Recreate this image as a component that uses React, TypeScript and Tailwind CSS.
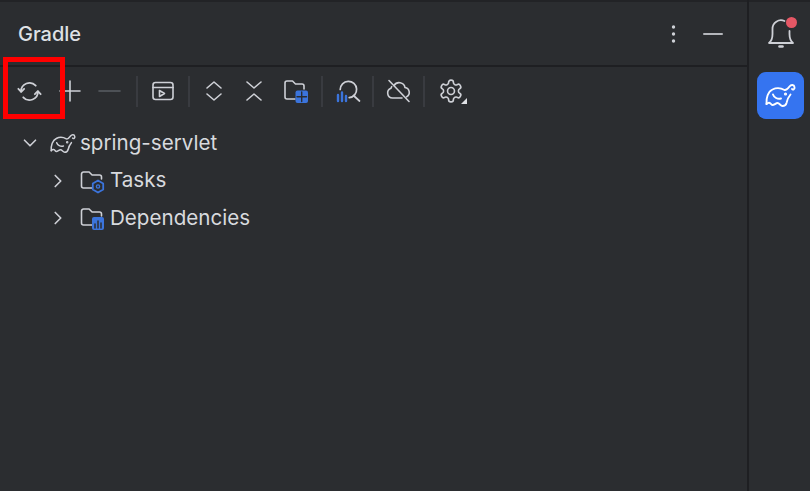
const stroke = "#ced0d6";
const blue = "#3b74dc";

function I({ children, size = 24, view = 24, className = "" }: { children: React.ReactNode; size?: number; view?: number; className?: string }) {
  return (
    <svg width={size} height={size} viewBox={`0 0 ${view} ${view}`} fill="none" stroke={stroke} strokeWidth={1.6} strokeLinecap="round" strokeLinejoin="round" className={className}>
      {children}
    </svg>
  );
}

function Btn({ children, className = "w-10" }: { children: React.ReactNode; className?: string }) {
  return <div className={`flex h-10 shrink-0 items-center justify-center ${className}`}>{children}</div>;
}

function Sep() {
  return <div className="mx-[6px] h-[31px] w-[2px] shrink-0 bg-[#393b40]" />;
}

const Elephant = ({ color, width, height, sw = 1.6 }: { color: string; width: number; height: number; sw?: number }) => (
  <svg width={width} height={height} viewBox="8 10 31 25" fill="none" stroke={color} strokeWidth={sw} strokeLinecap="round" strokeLinejoin="round">
    <path d="M9.500 31 C9 25 11 18.500 15.500 16.500 C19.500 14.500 24 15 27.500 17 C29.500 17.500 31 15.500 32.500 13.500 C34 11.500 37 11.500 37.500 14 C38 16 36 17.500 35 16" />
    <path d="M9.500 31 C11.500 29 13 29.500 14.500 31.500 C16 33.500 18.500 30 20.500 30 C22.500 30 23.500 33 25.500 33 C27.500 33 29 32 29.500 30 C30 27 31 24.500 33.500 21.500" />
    <path d="M16 21.500 C17 24.500 20.500 26.500 24 25.500" />
    <circle cx="28.500" cy="21" r="0.6" fill={color} />
  </svg>
);

const Folder = ({ children }: { children?: React.ReactNode }) => (
  <svg width="26" height="26" viewBox="0 0 26 26" fill="none" strokeLinecap="round" strokeLinejoin="round">
    <path d="M13 20H4.500a2 2 0 0 1-2-2V6a2 2 0 0 1 2-2h5.600l3 3h7.400a2 2 0 0 1 2 2v2" stroke={stroke} strokeWidth="1.600" />
    {children}
  </svg>
);

function Row({ indent, chevron, icon, label }: { indent: string; chevron: React.ReactNode; icon: React.ReactNode; label: string }) {
  return (
    <div className={`flex h-[37.5px] items-center ${indent}`}>
      <div className="flex w-[24px] justify-center">{chevron}</div>
      {icon}
      <span className="text-[20.6px] leading-none text-[#d8dade]">{label}</span>
    </div>
  );
}

export default function App() {
  return (
    <div className="relative flex h-[491px] w-[810px] overflow-hidden bg-[#2b2d30] font-['Inter',sans-serif]">
      <main className="flex min-w-0 flex-1 flex-col border-r-2 border-[#1e1f22]">
        <header className="flex h-[67px] shrink-0 items-center justify-between border-y-2 border-t-[#222326] border-b-[#1e1f22] pl-[18px] pr-[24px]">
          <h1 className="text-[20px] font-medium text-[#dfe1e5]">Gradle</h1>
          <div className="flex items-center gap-[18px]">
            <svg width="22" height="22" viewBox="0 0 22 22" fill="#ced0d6">
              <circle cx="10.500" cy="4" r="1.700" />
              <circle cx="10.500" cy="11" r="1.700" />
              <circle cx="10.500" cy="18" r="1.700" />
            </svg>
            <div className="h-[2px] w-[20px] rounded bg-[#b4b6bb]" />
          </div>
        </header>

        <div className="flex h-[48px] shrink-0 items-center pl-[10px]">
          <Btn>
            <I size={25} view={28} className="-translate-x-px">
              <path d="M4.500 14a9.500 9.500 0 0 1 16.500-6.500" strokeWidth="2" />
              <path d="M23.500 14a9.500 9.500 0 0 1-16.500 6.500" strokeWidth="2" />
              <path d="M1.500 11l3.200 3.400L8 11" strokeWidth="2" />
              <path d="M20 17l3.300-3.400 3.200 3.400" strokeWidth="2" />
            </I>
          </Btn>
          <Btn>
            <I>
              <path d="M12 2v20M2 12h20" />
            </I>
          </Btn>
          <Btn>
            <I>
              <path d="M1 12h21" stroke="#5a5d63" />
            </I>
          </Btn>
          <Sep />
          <Btn className="w-[38px]">
            <I>
              <rect x="2" y="3.500" width="20" height="17" rx="2.500" />
              <path d="M2 8.500h20" />
              <path d="M8.500 11.500v6l5-3z" />
            </I>
          </Btn>
          <Sep />
          <Btn className="w-[36px]">
            <I>
              <path d="M5 9l7-6 7 6M5 15l7 6 7-6" />
            </I>
          </Btn>
          <Btn className="w-[44px]">
            <I>
              <path d="M5 3l7 6 7-6M5 21l7-6 7 6" />
            </I>
          </Btn>
          <Btn className="w-[39px]">
            <svg width="26" height="26" viewBox="0 0 26 26" fill="none" strokeLinecap="round" strokeLinejoin="round">
              <path d="M12 21H4a2 2 0 0 1-2-2V5a2 2 0 0 1 2-2h5.500l3 3H19a2 2 0 0 1 2 2v3" stroke={stroke} strokeWidth="1.600" />
              <rect x="12.500" y="12.500" width="12.500" height="12.500" rx="2" fill={blue} />
              <path d="M18.700 14v9.500M14 18.700h9.500" stroke="#2b2d30" strokeWidth="1.400" />
            </svg>
          </Btn>
          <Sep />
          <Btn className="w-[37px]">
            <svg width="26" height="26" viewBox="0 0 26 26" fill="none" strokeLinecap="round">
              <path d="M5.200 11.500a8.200 8.200 0 1 1 9 8.200" stroke={stroke} strokeWidth="1.700" />
              <path d="M18.500 17.500l6 5.500" stroke={stroke} strokeWidth="1.700" />
              <path d="M3 17v6M7 14.500v8.500M11 18v5" stroke={blue} strokeWidth="2.400" />
            </svg>
          </Btn>
          <Sep />
          <Btn className="w-[37px]">
            <I size={28} view={28}>
              <path d="M9 8.500A6 6 0 0 1 20 10.500a5 5 0 0 1 1.500 9.400M17 21H7.500a5 5 0 0 1-1.500-9.700c.2-.6.4-1.100.7-1.600" />
              <path d="M4 3.500l20 21" />
            </I>
          </Btn>
          <Sep />
          <Btn className="w-[40px]">
            <div className="relative flex">
              <I size={26} view={24}>
                <path d="M12.220 2h-.44a2 2 0 0 0-2 2v.18a2 2 0 0 1-1 1.730l-.43.25a2 2 0 0 1-2 0l-.15-.08a2 2 0 0 0-2.730.73l-.22.38a2 2 0 0 0 .73 2.730l.15.1a2 2 0 0 1 1 1.720v.51a2 2 0 0 1-1 1.740l-.15.09a2 2 0 0 0-.73 2.730l.22.38a2 2 0 0 0 2.730.73l.15-.08a2 2 0 0 1 2 0l.43.25a2 2 0 0 1 1 1.730V20a2 2 0 0 0 2 2h.44a2 2 0 0 0 2-2v-.18a2 2 0 0 1 1-1.730l.43-.25a2 2 0 0 1 2 0l.15.08a2 2 0 0 0 2.730-.73l.22-.39a2 2 0 0 0-.73-2.730l-.15-.08a2 2 0 0 1-1-1.740v-.5a2 2 0 0 1 1-1.740l.15-.09a2 2 0 0 0 .73-2.730l-.22-.38a2 2 0 0 0-2.730-.73l-.15.08a2 2 0 0 1-2 0l-.43-.25a2 2 0 0 1-1-1.730V4a2 2 0 0 0-2-2z" strokeWidth="1.500" />
                <circle cx="12" cy="12" r="3.200" strokeWidth="1.500" />
              </I>
              <div className="absolute -right-[3px] bottom-0 h-0 w-0 border-b-[6px] border-l-[6px] border-b-[#dfe1e5] border-l-transparent" />
            </div>
          </Btn>
        </div>

        <section className="flex flex-col pt-[9.5px]">
          <Row
            indent="pl-[18px]"
            chevron={<I size={22}><path d="M6 9l6 6 6-6" strokeWidth="1.800" /></I>}
            icon={<div className="ml-[8px] mr-[4px] flex"><Elephant color={stroke} width={26} height={21} sw={1.800} /></div>}
            label="spring-servlet"
          />
          <Row
            indent="pl-[46px]"
            chevron={<I size={22}><path d="M9 6l6 6-6 6" strokeWidth="1.800" /></I>}
            icon={
              <div className="ml-[9px] mr-[5px] flex">
                <Folder>
                  <path d="M19 12.500l5.200 3v6L19 24.500l-5.200-3v-6z" stroke={blue} strokeWidth="1.800" />
                  <circle cx="19" cy="18.500" r="1.600" stroke={blue} strokeWidth="1.400" />
                </Folder>
              </div>
            }
            label="Tasks"
          />
          <Row
            indent="pl-[46px]"
            chevron={<I size={22}><path d="M9 6l6 6-6 6" strokeWidth="1.800" /></I>}
            icon={
              <div className="ml-[9px] mr-[5px] flex">
                <Folder>
                  <rect x="13" y="12" width="12" height="13" rx="2" fill={blue} />
                  <path d="M16 23v-4M19 23v-7M22 23v-5" stroke="#2b2d30" strokeWidth="1.500" />
                </Folder>
              </div>
            }
            label="Dependencies"
          />
        </section>
      </main>

      <aside className="flex w-[61px] shrink-0 flex-col items-center border-t-2 border-[#222326] pl-[2px] pt-[10px]">
        <div className="relative h-[38px] w-[38px]">
          <svg width="38" height="38" viewBox="0 0 38 38" fill="none" stroke={stroke} strokeWidth="1.800" strokeLinecap="round" strokeLinejoin="round">
            <path d="M22.500 9A8.500 8.500 0 0 0 10.500 17v5c0 4-1 7-3.500 9h24c-2.500-2-3.500-5-3.500-9v-3" />
            <path d="M17.500 34.500h3" strokeWidth="2.600" />
          </svg>
          <div className="absolute right-[3px] top-[5px] h-[11px] w-[11px] rounded-full bg-[#e55765]" />
        </div>
        <div className="mt-[22px] flex h-[47px] w-[47px] items-center justify-center rounded-[9px] bg-[#3574f0]">
          <Elephant color="#ffffff" width={31} height={25} sw={1.900} />
        </div>
      </aside>

      <div className="absolute left-[3px] top-[57px] h-[62px] w-[62px] border-[5px] border-[#ff0000]" />
    </div>
  );
}
